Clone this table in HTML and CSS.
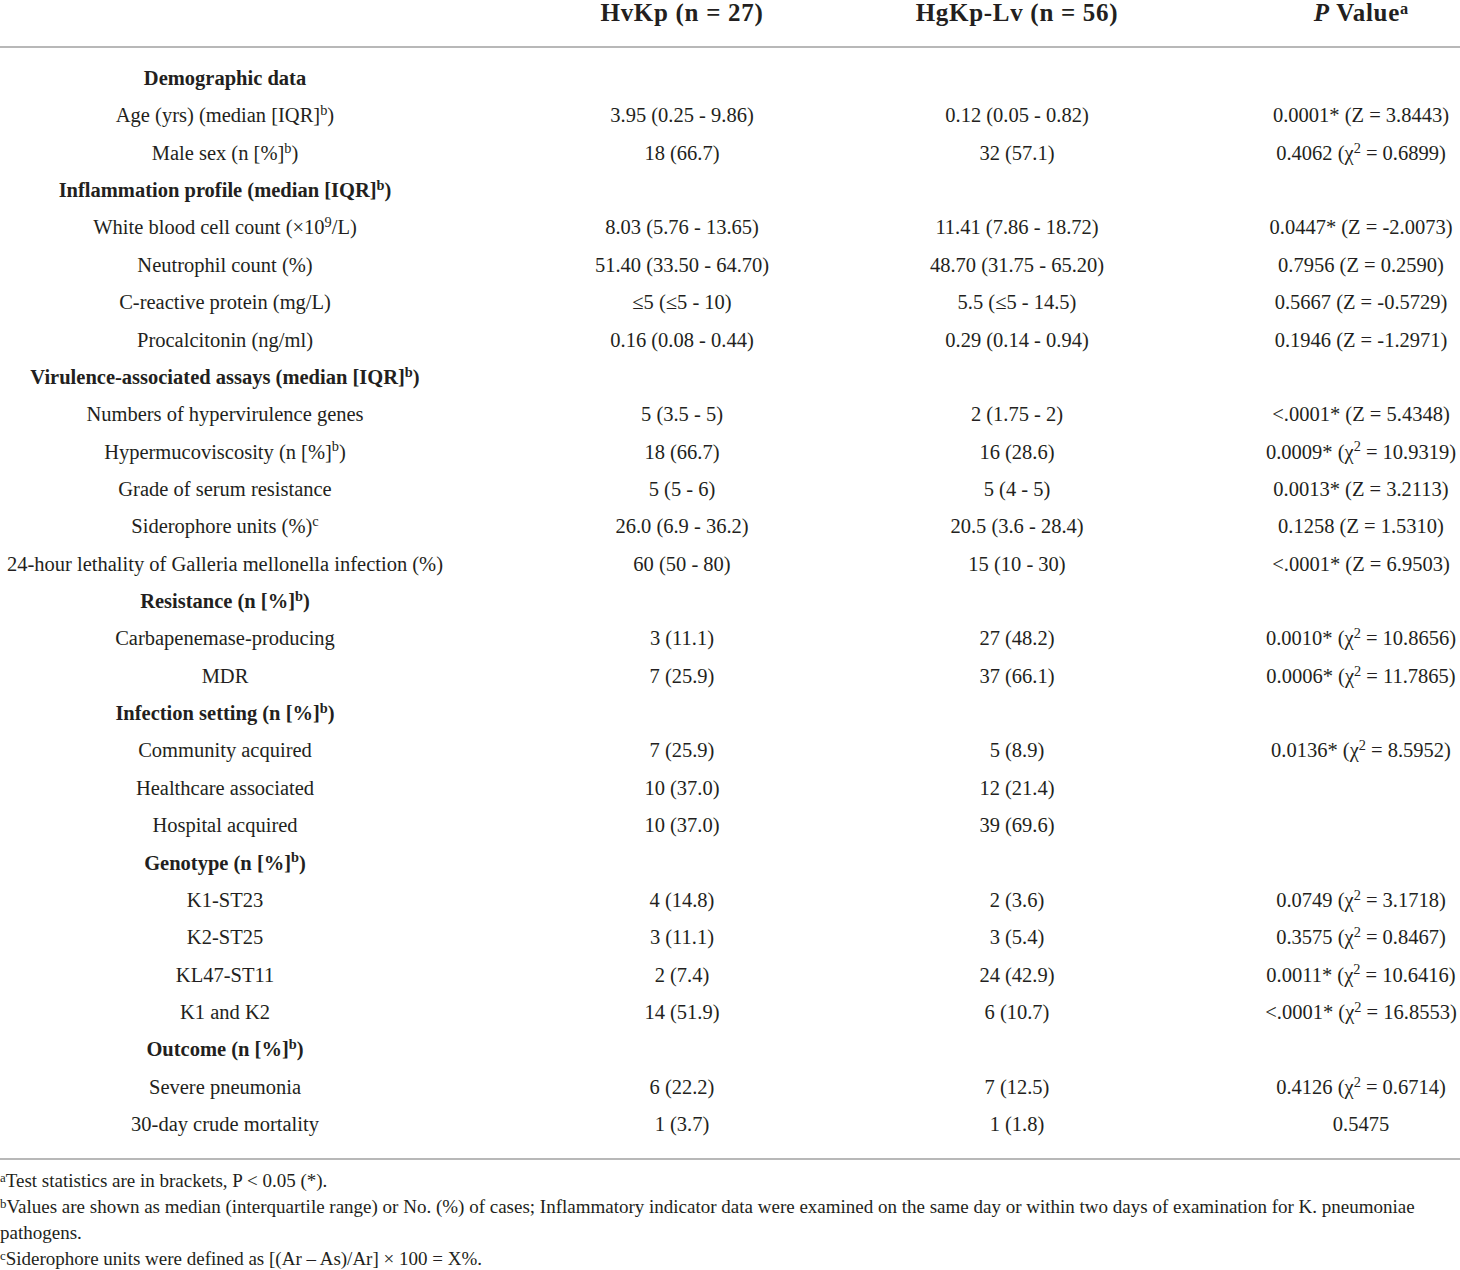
FILE: index.html
```html
<!DOCTYPE html>
<html lang="en">
<head>
  <meta charset="UTF-8">
  <title>HvKp vs HgKp-Lv</title>
  <meta name="viewport" content="width=device-width, initial-scale=1.0">
  <link rel="stylesheet" href="styles.css">
</head>
<body>

  <div class="table">
    <div class="row head">
      <span class="cell"></span>
      <span class="cell">HvKp (n = 27)</span>
      <span class="cell">HgKp-Lv (n = 56)</span>
      <span class="cell pcol"><i>P</i> Value<sup>a</sup></span>
    </div>

    <div class="rows">
      <div class="row section"><span class="cell">Demographic data</span></div>
      <div class="row">
        <span class="cell">Age (yrs) (median [IQR]<sup>b</sup>)</span>
        <span class="cell">3.95 (0.25 - 9.86)</span>
        <span class="cell">0.12 (0.05 - 0.82)</span>
        <span class="cell pcol">0.0001* (Z = 3.8443)</span>
      </div>
      <div class="row">
        <span class="cell">Male sex (n [%]<sup>b</sup>)</span>
        <span class="cell">18 (66.7)</span>
        <span class="cell">32 (57.1)</span>
        <span class="cell pcol">0.4062 (χ<sup>2</sup> = 0.6899)</span>
      </div>

      <div class="row section"><span class="cell">Inflammation profile (median [IQR]<sup>b</sup>)</span></div>
      <div class="row">
        <span class="cell">White blood cell count (×10<sup>9</sup>/L)</span>
        <span class="cell">8.03 (5.76 - 13.65)</span>
        <span class="cell">11.41 (7.86 - 18.72)</span>
        <span class="cell pcol">0.0447* (Z = -2.0073)</span>
      </div>
      <div class="row">
        <span class="cell">Neutrophil count (%)</span>
        <span class="cell">51.40 (33.50 - 64.70)</span>
        <span class="cell">48.70 (31.75 - 65.20)</span>
        <span class="cell pcol">0.7956 (Z = 0.2590)</span>
      </div>
      <div class="row">
        <span class="cell">C-reactive protein (mg/L)</span>
        <span class="cell">≤5 (≤5 - 10)</span>
        <span class="cell">5.5 (≤5 - 14.5)</span>
        <span class="cell pcol">0.5667 (Z = -0.5729)</span>
      </div>
      <div class="row">
        <span class="cell">Procalcitonin (ng/ml)</span>
        <span class="cell">0.16 (0.08 - 0.44)</span>
        <span class="cell">0.29 (0.14 - 0.94)</span>
        <span class="cell pcol">0.1946 (Z = -1.2971)</span>
      </div>

      <div class="row section"><span class="cell">Virulence-associated assays (median [IQR]<sup>b</sup>)</span></div>
      <div class="row">
        <span class="cell">Numbers of hypervirulence genes</span>
        <span class="cell">5 (3.5 - 5)</span>
        <span class="cell">2 (1.75 - 2)</span>
        <span class="cell pcol">&lt;.0001* (Z = 5.4348)</span>
      </div>
      <div class="row">
        <span class="cell">Hypermucoviscosity (n [%]<sup>b</sup>)</span>
        <span class="cell">18 (66.7)</span>
        <span class="cell">16 (28.6)</span>
        <span class="cell pcol">0.0009* (χ<sup>2</sup> = 10.9319)</span>
      </div>
      <div class="row">
        <span class="cell">Grade of serum resistance</span>
        <span class="cell">5 (5 - 6)</span>
        <span class="cell">5 (4 - 5)</span>
        <span class="cell pcol">0.0013* (Z = 3.2113)</span>
      </div>
      <div class="row">
        <span class="cell">Siderophore units (%)<sup>c</sup></span>
        <span class="cell">26.0 (6.9 - 36.2)</span>
        <span class="cell">20.5 (3.6 - 28.4)</span>
        <span class="cell pcol">0.1258 (Z = 1.5310)</span>
      </div>
      <div class="row">
        <span class="cell">24-hour lethality of Galleria mellonella infection (%)</span>
        <span class="cell">60 (50 - 80)</span>
        <span class="cell">15 (10 - 30)</span>
        <span class="cell pcol">&lt;.0001* (Z = 6.9503)</span>
      </div>

      <div class="row section"><span class="cell">Resistance (n [%]<sup>b</sup>)</span></div>
      <div class="row">
        <span class="cell">Carbapenemase-producing</span>
        <span class="cell">3 (11.1)</span>
        <span class="cell">27 (48.2)</span>
        <span class="cell pcol">0.0010* (χ<sup>2</sup> = 10.8656)</span>
      </div>
      <div class="row">
        <span class="cell">MDR</span>
        <span class="cell">7 (25.9)</span>
        <span class="cell">37 (66.1)</span>
        <span class="cell pcol">0.0006* (χ<sup>2</sup> = 11.7865)</span>
      </div>

      <div class="row section"><span class="cell">Infection setting (n [%]<sup>b</sup>)</span></div>
      <div class="row">
        <span class="cell">Community acquired</span>
        <span class="cell">7 (25.9)</span>
        <span class="cell">5 (8.9)</span>
        <span class="cell pcol">0.0136* (χ<sup>2</sup> = 8.5952)</span>
      </div>
      <div class="row">
        <span class="cell">Healthcare associated</span>
        <span class="cell">10 (37.0)</span>
        <span class="cell">12 (21.4)</span>
        <span class="cell pcol"></span>
      </div>
      <div class="row">
        <span class="cell">Hospital acquired</span>
        <span class="cell">10 (37.0)</span>
        <span class="cell">39 (69.6)</span>
        <span class="cell pcol"></span>
      </div>

      <div class="row section"><span class="cell">Genotype (n [%]<sup>b</sup>)</span></div>
      <div class="row">
        <span class="cell">K1-ST23</span>
        <span class="cell">4 (14.8)</span>
        <span class="cell">2 (3.6)</span>
        <span class="cell pcol">0.0749 (χ<sup>2</sup> = 3.1718)</span>
      </div>
      <div class="row">
        <span class="cell">K2-ST25</span>
        <span class="cell">3 (11.1)</span>
        <span class="cell">3 (5.4)</span>
        <span class="cell pcol">0.3575 (χ<sup>2</sup> = 0.8467)</span>
      </div>
      <div class="row">
        <span class="cell">KL47-ST11</span>
        <span class="cell">2 (7.4)</span>
        <span class="cell">24 (42.9)</span>
        <span class="cell pcol">0.0011* (χ<sup>2</sup> = 10.6416)</span>
      </div>
      <div class="row">
        <span class="cell">K1 and K2</span>
        <span class="cell">14 (51.9)</span>
        <span class="cell">6 (10.7)</span>
        <span class="cell pcol">&lt;.0001* (χ<sup>2</sup> = 16.8553)</span>
      </div>

      <div class="row section"><span class="cell">Outcome (n [%]<sup>b</sup>)</span></div>
      <div class="row">
        <span class="cell">Severe pneumonia</span>
        <span class="cell">6 (22.2)</span>
        <span class="cell">7 (12.5)</span>
        <span class="cell pcol">0.4126 (χ<sup>2</sup> = 0.6714)</span>
      </div>
      <div class="row">
        <span class="cell">30-day crude mortality</span>
        <span class="cell">1 (3.7)</span>
        <span class="cell">1 (1.8)</span>
        <span class="cell pcol">0.5475</span>
      </div>
    </div>
  </div>

  <div class="notes">
    <p><sup>a</sup>Test statistics are in brackets, P &lt; 0.05 (*).</p>
    <p><sup>b</sup>Values are shown as median (interquartile range) or No. (%) of cases; Inflammatory indicator data were examined on the same day or within two days of examination for K. pneumoniae pathogens.</p>
    <p><sup>c</sup>Siderophore units were defined as [(Ar – As)/Ar] × 100 = X%.</p>
  </div>

</body>
</html>
```

FILE: styles.css
```css
html, body {
  margin: 0;
  padding: 0;
  background: #fff;
}
body {
  color: #231f20;
  font-family: "Liberation Serif", "Times New Roman", serif;
  font-size: 20.5px;
  overflow: hidden;
}

/*table grid: label column, two groups, p value*/
.row {
  display: grid;
  grid-template-columns: 450px 464px 206px 1fr;
  height: 37.36px;
  line-height: 37.36px;
}
.cell {
  text-align: center;
  white-space: nowrap;
}
.pcol {
  padding-left: 142px;
}
.section {
  font-weight: bold;
}

.head {
  height: 46px;
  line-height: 26px;
  font-size: 25px;
  letter-spacing: 0.7px;
  font-weight: bold;
  border-bottom: 2px solid #b8b8b8;
}

.rows {
  padding: 12px 0 15px;
  border-bottom: 2px solid #b8b8b8;
}

sup {
  font-size: 0.7em;
  line-height: 0;
  position: relative;
  top: -0.5em;
  vertical-align: baseline;
  letter-spacing: 0;
}
.head sup {
  font-size: 0.65em;
  top: -0.45em;
}

/*footnotes*/
.notes {
  padding-top: 8px;
  font-size: 19px;
  line-height: 26px;
}
.notes p {
  margin: 0;
}
.notes sup {
  font-size: 0.68em;
  top: -0.45em;
}
```
